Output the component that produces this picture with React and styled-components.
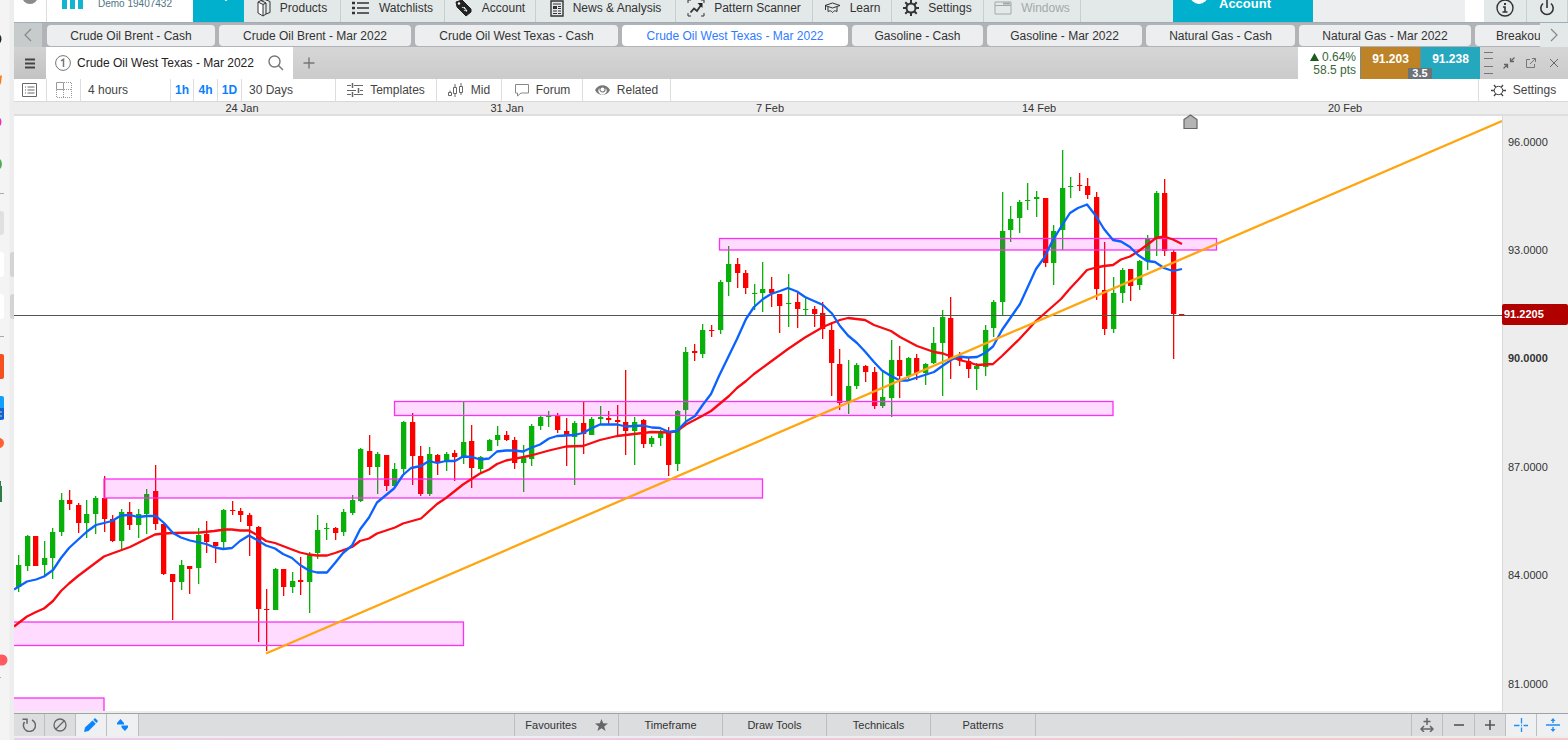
import React, { useState } from 'react';
import styled, { createGlobalStyle, css } from 'styled-components';

const GlobalStyle = createGlobalStyle`
  * {
    box-sizing: border-box;
  }
  body {
    margin: 0;
    font-family: 'Liberation Sans', Arial, sans-serif;
    font-size: 12px;
    color: #333;
    background: #ededed;
  }
  button {
    font: inherit;
    color: inherit;
    border: 0;
    padding: 0;
    background: none;
    cursor: pointer;
  }
`;

const Page = styled.div`
  min-height: 100vh;
  display: grid;
  grid-template-columns: 14px minmax(0, 1fr);
  overflow: hidden;
`;

const Rail = styled.aside`
  background: linear-gradient(90deg, #f4f4f4 9px, #ededed 10px);
`;

const Platform = styled.main`
  display: flex;
  flex-direction: column;
  min-width: 0;
`;

/* main navigation */

const NavBar = styled.nav`
  display: flex;
  flex: none;
  height: 29px;
  margin-top: -6px;
  background: #e3e8e8;
  border-bottom: 1px solid #9fadb8;
`;

const AvatarCell = styled.div`
  width: 33px;
  background: #fff;
  border-right: 1px solid #ddd;
  display: flex;
  justify-content: center;
`;

const Brand = styled.div`
  width: 146px;
  display: flex;
  align-items: center;
  gap: 14px;
  padding: 0 0 10px 15px;
  background: #fff;
  color: #4f7485;
  font-size: 10px;
  white-space: nowrap;
`;

const AccentButton = styled.button`
  width: ${(p) => p.$width}px;
  display: flex;
  align-items: center;
  justify-content: ${(p) => (p.$left ? 'flex-start' : 'center')};
  gap: 10px;
  padding: ${(p) => (p.$left ? '0 16px 10px' : '0 0 20px 15px')};
  background: #00b0cc;
  color: #fff;
  font-size: 13px;
  font-weight: bold;
`;

const NavLink = styled.a`
  width: ${(p) => p.$width}px;
  display: flex;
  align-items: center;
  justify-content: center;
  gap: 9px;
  color: ${(p) => (p.$muted ? '#a3a9a9' : '#333')};
  border-right: 1px solid #c9cfcf;
  text-decoration: none;
  white-space: nowrap;

  svg {
    flex: none;
  }
`;

const NavSpace = styled.div`
  flex: ${(p) => (p.$width ? `0 0 ${p.$width}px` : '1 1 0')};
  background: ${(p) => p.$color || 'transparent'};
`;

/* product tabs */

const TabStrip = styled.div`
  display: flex;
  flex: none;
  height: 24px;
  background: #b1b3b6;
`;

const TabScroll = styled.button`
  flex: none;
  width: ${(p) => p.$width}px;
  background: ${(p) => p.$color};
  color: #888;
  display: flex;
  align-items: center;
  justify-content: center;
`;

const TabList = styled.div`
  flex: 1;
  min-width: 0;
  display: flex;
  gap: 4px;
  padding: 2px 0 1px 5px;
  overflow: hidden;
`;

const ProductTab = styled.button`
  flex: none;
  width: ${(p) => p.$width}px;
  border-radius: 4px;
  background: ${(p) => (p.$active ? '#fff' : '#eceeef')};
  color: ${(p) => (p.$active ? '#2f7bff' : '#333')};
  white-space: nowrap;
`;

/* chart window title */

const TitleBar = styled.header`
  display: flex;
  flex: none;
  height: 32px;
  background: linear-gradient(#d6d6d6, #cbcbcb);
`;

const MenuButton = styled.button`
  width: 32px;
  display: flex;
  align-items: center;
  justify-content: center;
  background: linear-gradient(#d2d2d2, #c2c2c2);
`;

const ChartTab = styled.div`
  width: 247px;
  display: flex;
  align-items: center;
  gap: 6px;
  padding: 0 9px;
  background: #fff;
  color: #222;
  white-space: nowrap;

  button {
    display: flex;
    margin-left: auto;
  }
`;

const AddButton = styled.button`
  width: 31px;
  display: flex;
  align-items: center;
  justify-content: center;
`;

const Change = styled.div`
  width: 62px;
  margin-left: auto;
  padding: 4px 4px 0 0;
  background: #fff;
  color: #38683a;
  line-height: 13px;
  text-align: right;
`;

const Quotes = styled.div`
  position: relative;
  display: flex;
`;

const Quote = styled.button`
  width: 60px;
  padding-bottom: 8px;
  background: ${(p) => p.$color};
  color: #fff;
  font-weight: bold;
  border-left: 1px solid #7d8c80;
`;

const Spread = styled.span`
  position: absolute;
  bottom: 0;
  left: 50%;
  width: 24px;
  transform: translateX(-50%);
  background: #6c7276;
  color: #fff;
  font-size: 11px;
  font-weight: bold;
  line-height: 11px;
  text-align: center;
`;

const WindowTools = styled.div`
  display: flex;
  align-items: center;
  padding: 0 7px 0 4px;
  gap: 10px;

  button {
    display: flex;
  }
`;

/* chart toolbar */

const Toolbar = styled.div`
  display: flex;
  flex: none;
  height: 23px;
  background: #fff;
  border-bottom: 1px solid #d8d8d8;
`;

const ToolButton = styled.button`
  width: ${(p) => p.$width}px;
  display: flex;
  align-items: center;
  justify-content: ${(p) => (p.$left ? 'flex-start' : 'center')};
  gap: 7px;
  padding-left: ${(p) => (p.$left ? 7 : 0)}px;
  border-right: 1px solid #ddd;
  color: #444;

  ${(p) =>
    p.$quick &&
    css`
      color: #0a80ff;
      font-weight: bold;
    `}

  ${(p) =>
    p.$end &&
    css`
      margin-left: auto;
      border-right: 0;
      border-left: 1px solid #ddd;
    `}
`;

/* chart */

const ChartSvg = styled.svg`
  display: block;
  flex: 1 1 0;
  min-height: 0;
  width: 100%;
  background: #fff;

  text {
    font-family: 'Liberation Sans', Arial, sans-serif;
    font-size: 11px;
    fill: #333;
  }
`;

/* bottom bar */

const BottomBar = styled.footer`
  display: flex;
  flex: none;
  height: 23px;
  background: #dbdddf;
  border-top: 1px solid #a0a2a3;
`;

const BottomButton = styled.button`
  width: ${(p) => p.$width}px;
  display: flex;
  align-items: center;
  justify-content: center;
  gap: 18px;
  background: ${(p) => (p.$active ? '#eef0f2' : 'transparent')};
  border-right: 1px solid #bcbec0;
  color: #333;
  font-size: 11px;

  &:last-child {
    border-right: 0;
  }
`;

const BottomSpace = styled.div`
  flex: 1 1 0;
  border-right: 1px solid #bcbec0;
`;

const PageEdge = styled.div`
  flex: none;
  height: 4px;
  border-top: 2px solid #eee;
  background: linear-gradient(90deg, #e8cdee, #efc9e4 40%, #f3c9c9 80%);
`;

function Icon({ w = 16, h = 16, children, ...rest }) {
  return (
    <svg
      width={w}
      height={h}
      viewBox={`0 0 ${w} ${h}`}
      fill="none"
      stroke="currentColor"
      aria-hidden="true"
      {...rest}
    >
      {children}
    </svg>
  );
}

const ProductsIcon = () => (
  <Icon w={14} h={18}>
    <path d="M1 3v11l5 3V5.500z" fill="#fff" />
    <path d="M1 3l3-1.500 5 2.500v11l-3 2M6 5.500l3-1.500M4 1.500l4-1 5 2v11l-4 1.500" />
  </Icon>
);

const WatchlistIcon = () => (
  <Icon w={18} h={14} strokeWidth="1.6">
    <path d="M5 2h12M5 7h12M5 12h12" />
    <path d="M0 2h3M0 7h3M0 12h3" strokeWidth="2.6" />
  </Icon>
);

const TagIcon = () => (
  <Icon w={18} h={18}>
    <path d="M1 3l6-2 9 9v3l-5 4-9-9z" fill="#222" stroke="#222" />
    <circle cx="4" cy="4.500" r="1.2" fill="#fff" stroke="none" />
    <path d="M7 9c1-2 2 1 3 0M9 12c1-2 2 1 3 0M9 8l3 4" stroke="#fff" />
  </Icon>
);

const NewsIcon = () => (
  <Icon w={14} h={17}>
    <path d="M1 1h12v15H1z" strokeWidth="1.4" />
    <path d="M3 4h8M8 6.500h3M8 8.500h3M3 11h4M3 13.500h4M8 11h3M8 13.500h3" />
    <path d="M3 6h4v3H3z" fill="#333" stroke="none" />
  </Icon>
);

const PatternIcon = () => (
  <Icon w={18} h={18}>
    <path d="M1 4V1h3M14 1h3v3M17 14v3h-3M4 17H1v-3" />
    <path d="M3.500 13.500l3.500-4 3 2.500 4-6" strokeWidth="1.8" />
    <path d="M10.500 4h5v5z" fill="#222" stroke="none" />
  </Icon>
);

const LearnIcon = () => (
  <Icon w={17} h={12}>
    <path d="M1 3.500L8.500 1 16 3.500 8.500 6z" />
    <path d="M4 5v4.500c2-1 3-1 4.500 1 1.500-2 2.500-2 4.500-1V5" />
    <path d="M1.500 4v4" />
  </Icon>
);

const GearIcon = () => (
  <Icon w={16} h={16}>
    <circle cx="8" cy="8" r="4.5" strokeWidth="2" />
    <path
      d="M8 0v3M8 13v3M0 8h3M13 8h3M2.300 2.300l2.200 2.200M11.500 11.500l2.200 2.200M13.700 2.300l-2.200 2.200M4.500 11.500l-2.200 2.200"
      strokeWidth="2"
    />
  </Icon>
);

const WindowsIcon = () => (
  <Icon w={18} h={14}>
    <path d="M1 1h16v12H1zM1 4.500h16" />
    <path d="M9 2.500h7" strokeWidth="2" />
  </Icon>
);

const OutlineGearIcon = () => (
  <Icon w={15} h={15}>
    <circle cx="7.5" cy="7.5" r="4.2" />
    <path d="M0 7.500h3M12 7.500h3M3 2l2 2.500M12 2l-2 2.500M3 13l2-2.500M12 13l-2-2.500" strokeWidth="1.3" />
  </Icon>
);

const NAV_ITEMS = [
  { label: 'Products', icon: <ProductsIcon />, width: 97 },
  { label: 'Watchlists', icon: <WatchlistIcon />, width: 104 },
  { label: 'Account', icon: <TagIcon />, width: 91 },
  { label: 'News & Analysis', icon: <NewsIcon />, width: 140 },
  { label: 'Pattern Scanner', icon: <PatternIcon />, width: 137 },
  { label: 'Learn', icon: <LearnIcon />, width: 79 },
  { label: 'Settings', icon: <GearIcon />, width: 92 },
  { label: 'Windows', icon: <WindowsIcon />, width: 97, muted: true },
];

const PRODUCT_TABS = [
  { label: 'Crude Oil Brent - Cash', width: 168 },
  { label: 'Crude Oil Brent - Mar 2022', width: 192 },
  { label: 'Crude Oil West Texas - Cash', width: 203 },
  { label: 'Crude Oil West Texas - Mar 2022', width: 226 },
  { label: 'Gasoline - Cash', width: 131 },
  { label: 'Gasoline - Mar 2022', width: 155 },
  { label: 'Natural Gas - Cash', width: 149 },
  { label: 'Natural Gas - Mar 2022', width: 172 },
  { label: 'Breakouts', width: 96 },
];

// high, body top, body bottom, low, rising
const CANDLES = [
  [555, 565, 587, 592, 1], [535, 536, 566, 571, 1], [536, 536, 566, 566, 0],
  [541, 558, 565, 575, 1], [528, 532, 558, 579, 1], [493, 500, 532, 536, 1],
  [490, 500, 504, 510, 0], [503, 505, 523, 533, 0], [500, 514, 523, 538, 1],
  [496, 498, 514, 534, 1], [476, 498, 519, 532, 0], [515, 519, 541, 542, 0],
  [509, 512, 541, 549, 1], [502, 512, 525, 530, 0], [509, 514, 525, 538, 1],
  [489, 494, 514, 534, 1], [465, 491, 524, 530, 0], [523, 524, 574, 575, 0],
  [574, 574, 582, 620, 0], [560, 565, 582, 590, 1], [566, 566, 569, 594, 0],
  [528, 535, 568, 584, 1], [521, 534, 542, 553, 0], [542, 542, 546, 563, 0],
  [509, 510, 542, 548, 1], [501, 510, 511, 515, 0], [508, 511, 515, 522, 0],
  [513, 515, 526, 556, 0], [526, 527, 609, 642, 0], [589, 609, 610, 651, 0],
  [568, 569, 610, 610, 1], [569, 569, 587, 596, 0], [572, 581, 587, 593, 1],
  [557, 580, 582, 595, 0], [552, 554, 582, 613, 1], [515, 530, 553, 559, 1],
  [523, 528, 529, 540, 1], [527, 528, 533, 540, 0], [509, 512, 532, 536, 1],
  [495, 500, 513, 515, 1], [448, 449, 501, 502, 1], [435, 451, 467, 475, 0],
  [452, 454, 467, 494, 1], [455, 455, 486, 491, 0], [463, 469, 486, 487, 1],
  [421, 422, 469, 475, 1], [413, 422, 456, 485, 0], [446, 456, 494, 496, 0],
  [447, 454, 494, 496, 1], [454, 455, 463, 475, 0], [452, 454, 462, 471, 1],
  [450, 453, 457, 481, 0], [402, 442, 458, 464, 1], [425, 441, 468, 488, 0],
  [456, 457, 469, 474, 1], [439, 440, 451, 451, 1], [426, 435, 440, 446, 1],
  [431, 435, 440, 441, 0], [437, 440, 463, 469, 0], [445, 458, 463, 492, 1],
  [424, 426, 459, 466, 1], [415, 417, 426, 430, 1], [411, 416, 417, 427, 1],
  [413, 416, 430, 433, 0], [418, 431, 436, 466, 0], [421, 423, 437, 485, 1],
  [401, 423, 434, 454, 0], [417, 419, 435, 435, 1], [406, 417, 419, 424, 1],
  [411, 418, 420, 424, 0], [405, 420, 422, 435, 0], [370, 422, 431, 455, 0],
  [417, 422, 431, 465, 1], [419, 420, 444, 448, 0], [436, 438, 444, 447, 1],
  [430, 432, 438, 446, 1], [427, 431, 465, 476, 0], [410, 411, 464, 471, 1],
  [347, 352, 410, 424, 1], [344, 351, 353, 361, 0], [324, 330, 354, 358, 1],
  [325, 330, 331, 337, 0], [280, 282, 330, 334, 1], [246, 264, 282, 296, 1],
  [258, 264, 273, 288, 0], [270, 273, 288, 294, 0], [284, 293, 294, 310, 1],
  [262, 289, 293, 312, 1], [277, 289, 293, 307, 0], [294, 294, 306, 333, 0],
  [274, 303, 304, 327, 1], [292, 302, 309, 328, 0], [297, 309, 310, 315, 1],
  [306, 309, 314, 327, 0], [302, 313, 329, 339, 0], [322, 330, 363, 396, 0],
  [349, 364, 403, 410, 0], [360, 386, 402, 414, 1], [363, 365, 386, 389, 1],
  [365, 366, 372, 382, 0], [367, 372, 406, 409, 0], [371, 397, 406, 408, 1],
  [340, 360, 398, 417, 1], [346, 360, 376, 398, 0], [357, 358, 376, 379, 1],
  [354, 358, 373, 380, 0], [363, 364, 373, 385, 1], [327, 343, 363, 364, 1],
  [310, 317, 343, 396, 1], [297, 318, 359, 379, 0], [352, 356, 360, 366, 0],
  [358, 361, 369, 378, 0], [363, 366, 369, 390, 1], [325, 330, 367, 376, 1],
  [300, 302, 328, 337, 1], [192, 231, 302, 316, 1], [206, 219, 230, 242, 1],
  [200, 202, 218, 233, 1], [183, 200, 201, 210, 1], [191, 197, 199, 217, 1],
  [198, 198, 263, 267, 0], [225, 231, 263, 285, 1], [150, 188, 230, 250, 1],
  [177, 186, 187, 198, 1], [173, 185, 186, 191, 0], [178, 186, 195, 199, 0],
  [192, 197, 289, 300, 0], [242, 290, 329, 335, 0], [277, 293, 329, 333, 1],
  [268, 270, 293, 303, 1], [269, 269, 286, 301, 0], [260, 261, 285, 290, 1],
  [235, 239, 261, 270, 1], [191, 193, 238, 256, 1], [179, 193, 251, 256, 0],
  [250, 252, 314, 359, 0], [314, 314, 316, 316, 0],
];

const FAST_AVERAGE =
  '14,589.5 27,581.5 36,579.5 44,576.5 53,570 61,558 69,548 87,531.5 96,525 112,521 121,515.5 130,515 138,517 147,516 156,516 164,523 173,533 181,537.5 190,540.5 206,544 215,547.5 223,549 232,548 240,541 249,535.5 258,540.5 266,545.5 275,548.5 283,554 292,558 300,565 309,570.5 317,572.5 327,572.5 335,563 343,553 352,545.5 360,529.5 369,517.5 377,502.5 394,488.5 403,475 411,468 421,466 429,461 437,463 446,461 455,461 463,456.5 472,457 480,459.5 489,458.5 497,451.5 506,450.5 514,450.5 523,451.5 532,447.5 540,444.5 549,438.5 557,436 574,435 583,433 591,428.5 600,424.5 617,424.5 626,426.5 643,425.5 652,427.5 660,428 669,432 677,431 686,421.5 695,416 703,404.5 711,394 719,376 737,339 746,319 754,307 763,299 771,294 780,291 788,288 797,291.5 805,297 823,305 832,313.5 840,326 848,335.5 857,343 865,351.5 874,362 882,370.5 891,376 900,380.5 908,380.5 917,377.5 934,372 943,365.5 951,360 959,356.5 968,357.5 977,357 985,353 993,346.5 1002,330 1020,304 1036,269 1044,258 1053,240 1061,227 1070,213 1078,208 1087,204.5 1096,216 1104,229 1113,240 1121,241.5 1130,247 1138,255 1147,261 1155,262 1164,268 1173,271 1182,269';

const SLOW_AVERAGE =
  '14,626.5 27,616.5 36,612 44,608.5 53,601 61,591 69,583.5 78,576 104,556.5 112,553.5 130,547 147,538.5 155,534.5 164,533.5 173,533 200,532.5 214,531 225,529.5 232,529.5 240,530.5 249,530.5 258,535.5 266,541 275,543 292,549.5 300,552.5 309,554.5 317,555.5 327,555.5 335,553 352,547 360,541 369,538.5 377,533.5 386,530.5 395,527.5 403,523.5 421,518.5 437,504 446,498 463,484.5 480,473.5 489,469.5 497,464 506,460.5 531,455.5 549,450.5 566,446.5 583,446 600,440 617,436 634,434 652,432 669,432.5 677,431 686,424.5 703,415.5 711,411 720,403.5 729,396 737,388 746,381 754,374 771,361.5 788,349 805,337.5 823,327 831,323.5 840,320 848,318 865,320 874,325 891,331 900,337 917,346 934,352 943,353.5 951,356.5 959,360 968,362 977,365 993,364 1002,356 1019,339.5 1036,321 1061,299 1070,288.5 1078,280 1087,270 1096,267.5 1104,266 1113,265 1121,259.5 1130,256.5 1138,251.5 1147,245 1156,238 1164,236.5 1173,239.5 1182,244';

// x, y, right, bottom
const ZONES = [
  [719.5, 238.5, 1216.5, 250],
  [394.5, 401.5, 1113, 415.5],
  [104, 479, 762.5, 498],
  [10, 622, 463.5, 645.5],
  [10, 698, 104, 720],
];

const DATES = [
  ['24 Jan', 242],
  ['31 Jan', 507],
  ['7 Feb', 770],
  ['14 Feb', 1039],
  ['20 Feb', 1345],
];

const PRICES = [
  ['96.0000', 142],
  ['93.0000', 250],
  ['90.0000', 358],
  ['87.0000', 467],
  ['84.0000', 575],
  ['81.0000', 684],
];

const UP = '#0ab00a';
const DOWN = '#fc0000';

function Chart() {
  return (
    <ChartSvg viewBox="14 102 1554 611" preserveAspectRatio="none" role="img" aria-label="Price chart">
      <defs>
        <clipPath id="plot">
          <rect x="14" y="116" width="1488" height="595" />
        </clipPath>
      </defs>

      <g clipPath="url(#plot)">
        {CANDLES.map(([high, top, bottom, low, rising], i) => {
          const x = Math.round(18 + i * 8.555);
          return (
            <g key={i} fill={rising ? UP : DOWN}>
              <rect x={x} y={high} width="1.3" height={low - high} />
              <rect x={x - 2} y={top} width="5.3" height={bottom - top} />
            </g>
          );
        })}
        {ZONES.map(([x, y, right, bottom]) => (
          <rect
            key={y}
            x={x}
            y={y}
            width={right - x}
            height={bottom - y}
            fill="#ff00ff"
            fillOpacity="0.14"
            stroke="#fa30f5"
            strokeWidth="1.3"
          />
        ))}
        <path d="M14 315.500H1502" stroke="#555" strokeWidth="1.2" />
        <polyline points={SLOW_AVERAGE} fill="none" stroke="#fa0a10" strokeWidth="2.3" strokeLinejoin="round" />
        <polyline points={FAST_AVERAGE} fill="none" stroke="#0a62ff" strokeWidth="2.3" strokeLinejoin="round" />
        <path d="M266 653.500L1502 121" stroke="#ffa510" strokeWidth="2.3" />
      </g>

      <rect x="14" y="102" width="1554" height="12" fill="#ededed" />
      <rect x="14" y="114" width="1554" height="2" fill="#dedede" />
      {DATES.map(([label, x]) => (
        <text key={label} x={x} y="112" textAnchor="middle">
          {label}
        </text>
      ))}

      <rect x="1502" y="116" width="66" height="597" fill="#ededed" />
      <rect x="1502" y="116" width="1" height="595" fill="#d8d8d8" />
      <rect x="14" y="711" width="1554" height="2" fill="#ededed" />
      {PRICES.map(([label, y]) => (
        <text key={label} x="1508" y={y + 4} fontWeight={label === '90.0000' ? 'bold' : 'normal'}>
          {label}
        </text>
      ))}
      <rect x="1502" y="304" width="66" height="21" rx="2" fill="#b00000" />
      <text x="1504" y="318" fontWeight="bold" style={{ fill: '#fff' }}>
        91.2205
      </text>
      <path d="M1184 119.500L1190.500 115l6.500 4.500V128.500H1184z" fill="#b4b4b4" stroke="#666" strokeWidth="1.2" />
    </ChartSvg>
  );
}

// edges of the launcher icons that stick out beside the platform
function RailIcons() {
  return (
    <svg width="14" height="700" aria-hidden="true">
      <circle cx="-5" cy="39" r="6.5" fill="#222" />
      <path d="M0 76l2-1-1 8-1 2z" fill="#ff7a1a" />
      <circle cx="-5" cy="122" r="6.5" fill="#f32bb5" />
      <circle cx="-5" cy="164" r="7" fill="#4caf50" />
      <path d="M0 193.500h4M0 336.500h4" stroke="#aaa" />
      <rect x="-10" y="211" width="14" height="24" rx="3" fill="#e0e0e0" />
      <rect x="-10" y="252" width="14" height="25" rx="3" fill="#fff" />
      <rect x="-10" y="294" width="14" height="25" rx="3" fill="#fff" />
      <rect x="10" y="252" width="8" height="25" rx="3" fill="#d4d4d4" />
      <rect x="10" y="294" width="8" height="25" rx="3" fill="#d4d4d4" />
      <rect x="-10" y="354" width="14" height="25" rx="2" fill="#f4511e" />
      <rect x="-10" y="396" width="14" height="24" rx="2" fill="#12a0ff" />
      <path d="M0 408h4v11l-4 1z" fill="#0b5fe0" />
      <path d="M0 412h2M0 416h2" stroke="#ffd54f" />
      <circle cx="-1" cy="443" r="5" fill="#ff6230" />
      <path d="M0 481h1v5h1v16H0z" fill="#2f7d46" />
      <circle cx="2" cy="660" r="5.5" fill="#ff5a5f" />
      <path d="M0 677.500h1" stroke="#aaa" />
    </svg>
  );
}

export default function App() {
  const [activeTab, setActiveTab] = useState(3);

  return (
    <>
      <GlobalStyle />
      <Page>
        <Rail>
          <RailIcons />
        </Rail>
        <Platform>
          <NavBar>
            <AvatarCell>
              <Icon w={18} h={14} stroke="none">
                <circle cx="9" cy="2" r="8" fill="#8b8b8b" />
              </Icon>
            </AvatarCell>
            <Brand>
              <Icon w={22} h={18} stroke="none" fill="#12b4d0">
                <path d="M0 4h5v11H0zM8 0h5v15H8zM16 2h5v13h-5z" />
              </Icon>
              <span>Demo 19407432</span>
            </Brand>
            <AccentButton $width={51} aria-label="Open account menu">
              <Icon w={10} h={6} strokeWidth="2">
                <path d="M1 1l4 4 4-4" />
              </Icon>
            </AccentButton>
            {NAV_ITEMS.map((item) => (
              <NavLink key={item.label} href="#" $width={item.width} $muted={item.muted}>
                {item.icon}
                <span>{item.label}</span>
              </NavLink>
            ))}
            <NavSpace />
            <AccentButton $width={140} $left>
              <Icon w={20} h={18} stroke="none">
                <circle cx="10" cy="1" r="9" fill="#fff" />
              </Icon>
              Account
            </AccentButton>
            <NavSpace $width={152} $color="#eceef0" />
            <NavSpace $width={19} $color="#fff" />
            <NavLink href="#" $width={43} aria-label="Information">
              <Icon w={18} h={18} strokeWidth="1.4">
                <circle cx="9" cy="9" r="8" />
                <path d="M9 4v2" strokeWidth="2" />
                <path d="M7 8h2v5M6.500 13h5" strokeWidth="1.6" />
              </Icon>
            </NavLink>
            <NavLink href="#" $width={41} aria-label="Log out">
              <Icon w={16} h={18} strokeWidth="1.6">
                <path d="M8 1v8M4 4.500a6.200 6.200 0 1 0 8 0" />
              </Icon>
            </NavLink>
          </NavBar>

          <TabStrip>
            <TabScroll $width={28} $color="#c6cccc" aria-label="Previous tabs">
              <Icon w={8} h={14} strokeWidth="1.2">
                <path d="M7 1L1 7l6 6" />
              </Icon>
            </TabScroll>
            <TabList>
              {PRODUCT_TABS.map((tab, i) => (
                <ProductTab
                  key={tab.label}
                  $width={tab.width}
                  $active={i === activeTab}
                  onClick={() => setActiveTab(i)}
                >
                  {tab.label}
                </ProductTab>
              ))}
            </TabList>
            <TabScroll $width={28} $color="#e3e8e8" aria-label="Next tabs">
              <Icon w={8} h={14} strokeWidth="1.2">
                <path d="M1 1l6 6-6 6" />
              </Icon>
            </TabScroll>
          </TabStrip>

          <TitleBar>
            <MenuButton aria-label="Menu">
              <Icon w={10} h={11} strokeWidth="2" stroke="#444">
                <path d="M0 1.500h10M0 5.500h10M0 9.500h10" />
              </Icon>
            </MenuButton>
            <ChartTab>
              <Icon w={16} h={16} stroke="#777">
                <circle cx="8" cy="8" r="7.4" />
                <path d="M6 5.800L8.500 4.300V12" strokeWidth="1.5" />
              </Icon>
              <span>Crude Oil West Texas - Mar 2022</span>
              <button aria-label="Search product">
                <Icon w={16} h={16} stroke="#777" strokeWidth="1.4">
                  <circle cx="6.5" cy="6.5" r="5.5" />
                  <path d="M10.500 10.500l4.500 4.500" />
                </Icon>
              </button>
            </ChartTab>
            <AddButton aria-label="Add chart">
              <Icon w={12} h={12} stroke="#777" strokeWidth="1.4">
                <path d="M6 0.500v11M0.500 6h11" />
              </Icon>
            </AddButton>
            <Change>
              <div>
                <Icon w={9} h={8} stroke="none" fill="#1d5c1d">
                  <path d="M4.500 0L9 8H0z" />
                </Icon>{' '}
                0.64%
              </div>
              <div>58.5 pts</div>
            </Change>
            <Quotes>
              <Quote $color="#bd8326">91.203</Quote>
              <Quote $color="#25a7bd">91.238</Quote>
              <Spread>3.5</Spread>
            </Quotes>
            <WindowTools>
              <Icon w={9} h={24} stroke="#777">
                <path d="M0 1.500h9M0 7.500h9M0 15.500h9M0 22.500h9" />
              </Icon>
              <button aria-label="Minimise">
                <Icon w={12} h={12} stroke="#666">
                  <path d="M7.500 1v3.500H11M11.500 0.500L8 4M1 7.500h3.500V11M4 8L0.500 11.500" strokeWidth="1.3" />
                </Icon>
              </button>
              <button aria-label="Open in new window">
                <Icon w={12} h={12} stroke="#777">
                  <path d="M5 2.500H1.500v8h8V7M7 1.500h3.500V5M10.500 1.500L5 7" />
                </Icon>
              </button>
              <button aria-label="Close">
                <Icon w={14} h={12} stroke="#666">
                  <path d="M3 2l8 8M11 2l-8 8" />
                </Icon>
              </button>
            </WindowTools>
          </TitleBar>

          <Toolbar>
            <ToolButton $width={33} aria-label="Chart list">
              <Icon w={16} h={14} stroke="#666">
                <path d="M0.500 0.500h14v13h-14zM3 4h1M3 7h1M3 10h1M5.500 4h7M5.500 7h7M5.500 10h7" />
              </Icon>
            </ToolButton>
            <ToolButton $width={34} aria-label="Layout">
              <Icon w={16} h={16} stroke="#999">
                <path d="M0.500 0.500h7v7h-7z" />
                <path d="M8 0.500h7.500v15h-15V8M7.500 8v7M8 7.500h7" strokeDasharray="1 1" />
              </Icon>
            </ToolButton>
            <ToolButton $width={90} $left>4 hours</ToolButton>
            <ToolButton $width={23} $quick>1h</ToolButton>
            <ToolButton $width={24} $quick>4h</ToolButton>
            <ToolButton $width={24} $quick>1D</ToolButton>
            <ToolButton $width={94} $left>30 Days</ToolButton>
            <ToolButton $width={101}>
              <Icon w={16} h={14} stroke="#666">
                <path d="M0 2.500h4M7 2.500h9M0 7.500h9M13 7.500h3M0 11.500h4M7 11.500h9" />
                <path d="M5.500 0v5M11.500 5v5M5.500 9v5" strokeWidth="1.5" />
              </Icon>
              Templates
            </ToolButton>
            <ToolButton $width={65}>
              <Icon w={16} h={14} stroke="#666">
                <path d="M0.500 9.500h3v3h-3zM5.500 4.500h3v6h-3zM11.500 3.500h3v6h-3zM7 1v3.500M7 10.500V14M13 0v3.500M13 9.500V12M2 7.500v2" />
              </Icon>
              Mid
            </ToolButton>
            <ToolButton $width={81}>
              <Icon w={15} h={14} stroke="#888">
                <path d="M1.500 1.500h13v8.500H7l-3.500 3V10h-2z" />
              </Icon>
              Forum
            </ToolButton>
            <ToolButton $width={88}>
              <Icon w={15} h={10} stroke="none">
                <path d="M0 5c3-6.500 12-6.500 15 0-3 6.500-12 6.500-15 0z" fill="#777" />
                <path d="M4.500 3a4 4 0 1 0 6 0c.8 3-1 4.500-3 4.500S4 6 4.500 3z" fill="#fff" />
                <circle cx="7.5" cy="4.5" r="2" fill="#fff" />
              </Icon>
              Related
            </ToolButton>
            <ToolButton $width={90} $end>
              <OutlineGearIcon />
              Settings
            </ToolButton>
          </Toolbar>

          <Chart />

          <BottomBar>
            <BottomButton $width={31} aria-label="Reset">
              <Icon w={14} h={14} stroke="#666" strokeWidth="1.5">
                <path d="M10 2a6 6 0 1 1-7.500 2" />
                <path d="M0.500 1.200h4.500v4.500" />
              </Icon>
            </BottomButton>
            <BottomButton $width={31} aria-label="Clear drawings">
              <Icon w={14} h={14} stroke="#666" strokeWidth="1.3">
                <circle cx="7" cy="7" r="6" />
                <path d="M11.500 2.500l-9 9" />
              </Icon>
            </BottomButton>
            <BottomButton $width={31} $active aria-label="Draw">
              <Icon w={14} h={14} stroke="none" fill="#0a84ff">
                <path d="M0 14l1-4.500 7.500-7 3.300 3.300L4.500 13zM9.300 1.800L11 0l3 3-1.500 2z" />
              </Icon>
            </BottomButton>
            <BottomButton $width={32} $active aria-label="Sort">
              <Icon w={12} h={12} stroke="none" fill="#0a84ff">
                <path d="M0 4L3.500 0 7 4v1.500H0zM4.500 6.500H11V8.500L8 12 4.500 8.500z" />
              </Icon>
            </BottomButton>
            <BottomSpace />
            <BottomButton $width={104}>
              Favourites
              <Icon w={13} h={12} stroke="none" fill="#666">
                <path d="M6.500 0l1.700 4.300 4.800.2-3.800 2.900 1.400 4.600-4.100-2.700L2.400 12l1.400-4.600L0 4.500l4.800-.2z" />
              </Icon>
            </BottomButton>
            <BottomButton $width={104}>Timeframe</BottomButton>
            <BottomButton $width={104}>Draw Tools</BottomButton>
            <BottomButton $width={104}>Technicals</BottomButton>
            <BottomButton $width={105}>Patterns</BottomButton>
            <BottomSpace />
            <BottomButton $width={31} aria-label="Fit width">
              <Icon w={14} h={14} stroke="#666" strokeWidth="1.5">
                <path d="M7 0v7M3.500 3.500h7M1 11h12M4 8l-3 3 3 3M10 8l3 3-3 3" />
              </Icon>
            </BottomButton>
            <BottomButton $width={32} aria-label="Zoom out">
              <Icon w={10} h={10} stroke="#555" strokeWidth="1.6">
                <path d="M0 5h10" />
              </Icon>
            </BottomButton>
            <BottomButton $width={31} aria-label="Zoom in">
              <Icon w={10} h={10} stroke="#555" strokeWidth="1.6">
                <path d="M0 5h10M5 0v10" />
              </Icon>
            </BottomButton>
            <BottomButton $width={31} $active aria-label="Crosshair">
              <Icon w={14} h={14} stroke="#1f8ff5">
                <path d="M0 7.500h5.500M9.500 7.500H14M7.500 0v5.500M7.500 9.500V14M7 7.500h1" strokeWidth="1.3" />
              </Icon>
            </BottomButton>
            <BottomButton $width={31} $active aria-label="Fit height">
              <Icon w={14} h={14} stroke="#1f8ff5" strokeWidth="1.4">
                <path d="M0 7h14M7 2v3M7 9v3" />
                <path d="M4.500 3L7 0l2.500 3zM4.500 11L7 14l2.500-3z" fill="#1f8ff5" stroke="none" />
              </Icon>
            </BottomButton>
          </BottomBar>
          <PageEdge />
        </Platform>
      </Page>
    </>
  );
}
